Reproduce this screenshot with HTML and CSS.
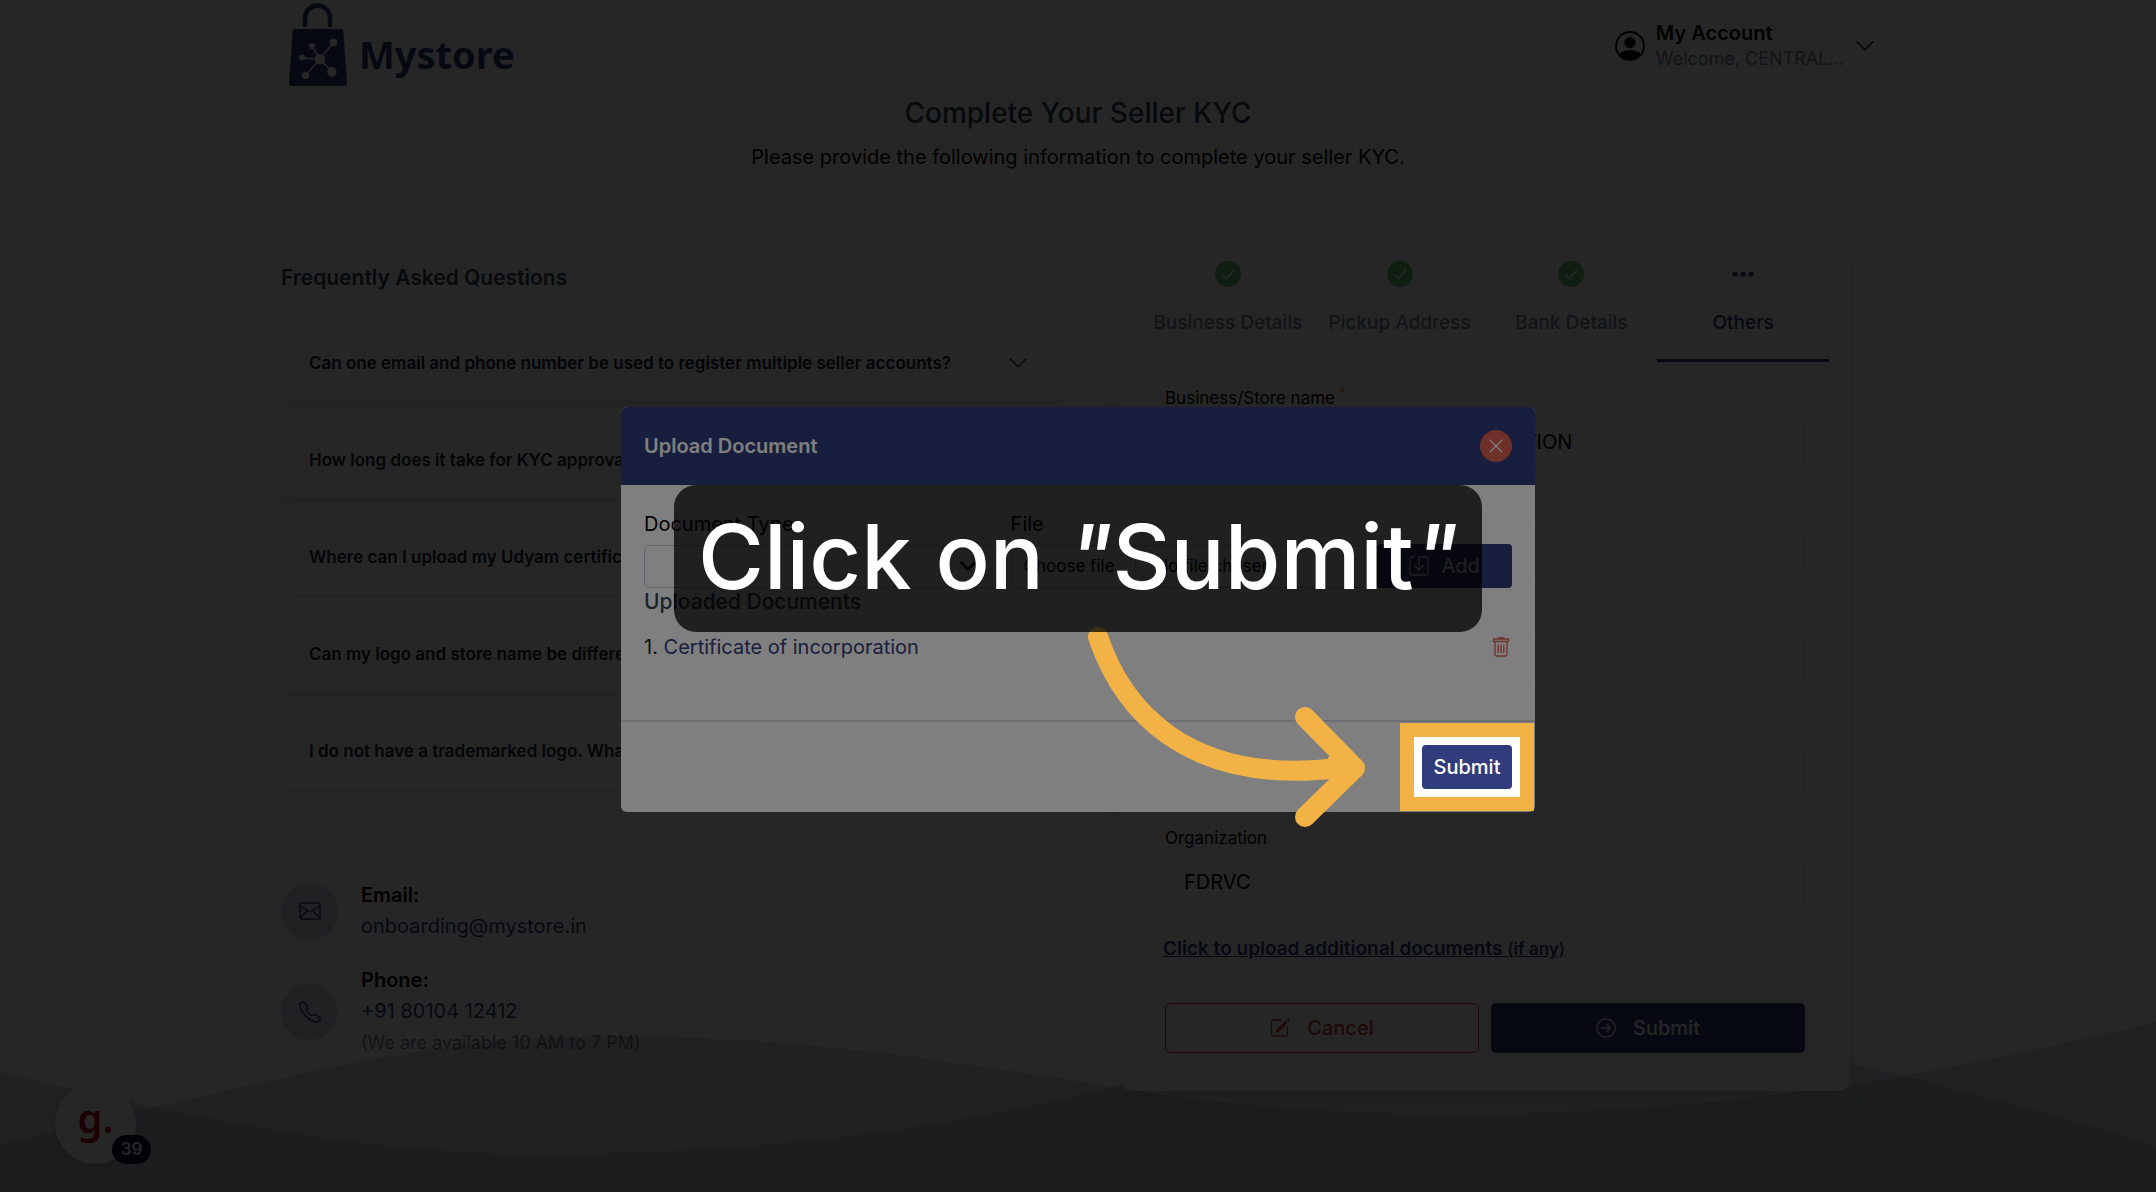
FILE: index.html
```html
<!DOCTYPE html>
<html lang="en">

<head>
  <meta charset="UTF-8">
  <meta name="viewport" content="width=device-width, initial-scale=1.0">
  <title>Mystore - Complete Your Seller KYC</title>
  <link rel="stylesheet" href="styles.css">
</head>

<body>
  <svg class="sprite" aria-hidden="true">
    <symbol id="chevron" viewBox="0 0 16 16">
      <path d="M1.6 4.6 8 11l6.4-6.4" fill="none" stroke="currentColor" stroke-linecap="round" stroke-linejoin="round" />
    </symbol>
    <symbol id="check" viewBox="0 0 26 26">
      <circle cx="13" cy="13" r="13" fill="currentColor" />
      <path d="M7.5 13.8l3.7 4L19 8.8" fill="none" stroke="#fff" stroke-width="1.6" stroke-linecap="round" stroke-linejoin="round" />
    </symbol>
  </svg>

  <header class="header">
    <div class="container header-inner">
      <a class="logo" href="#">
        <svg width="60" height="84" viewBox="0 0 60 84" aria-hidden="true">
          <path d="M17 24V15a12.500 12.500 0 0 1 25 0v9" fill="none" stroke="currentColor" stroke-width="4.500" />
          <path d="M7 26h46q2.200 0 2.400 2.200L59 80.500q.2 2.500-2 2.500H3q-2.200 0-2-2.500L4.600 28.200Q4.800 26 7 26z" fill="currentColor" />
          <g stroke="#fff" stroke-width="1.500" fill="#fff">
            <path d="M32 56 45 40M32 56 24 43M32 56 14 55M32 56 17 73M32 56 44 69" />
            <circle cx="32" cy="56" r="4.500" />
            <circle cx="45.500" cy="39.500" r="3" />
            <circle cx="24" cy="43" r="2.200" />
            <circle cx="14" cy="54.500" r="2.200" />
            <circle cx="17.500" cy="72.500" r="2.800" />
            <circle cx="44" cy="69" r="4" />
          </g>
        </svg>
        <span>Mystore</span>
      </a>
      <button class="account" type="button">
        <svg width="30" height="30" viewBox="0 0 30 30" aria-hidden="true">
          <defs>
            <clipPath id="avatar"><circle cx="15" cy="15" r="14" /></clipPath>
          </defs>
          <circle cx="15" cy="15" r="14" fill="none" stroke="currentColor" stroke-width="1.800" />
          <circle cx="15" cy="11.500" r="5.600" fill="currentColor" />
          <ellipse cx="15" cy="27" rx="12" ry="8" fill="currentColor" clip-path="url(#avatar)" />
        </svg>
        <span class="account-text">
          <strong>My Account</strong>
          <small>Welcome, CENTRAL...</small>
        </span>
        <svg class="chevron" width="20" height="20" aria-hidden="true"><use href="#chevron" /></svg>
      </button>
    </div>
  </header>

  <main class="container">
    <div class="intro">
      <h1>Complete Your Seller KYC</h1>
      <p>Please provide the following information to complete your seller KYC.</p>
    </div>

    <div class="columns">
      <section class="help">
        <h2>Frequently Asked Questions</h2>
        <div class="faq">
          <button type="button">Can one email and phone number be used to register multiple seller accounts?
            <svg width="20" height="20" aria-hidden="true"><use href="#chevron" /></svg></button>
          <button type="button">How long does it take for KYC approval?
            <svg width="20" height="20" aria-hidden="true"><use href="#chevron" /></svg></button>
          <button type="button">Where can I upload my Udyam certificate?
            <svg width="20" height="20" aria-hidden="true"><use href="#chevron" /></svg></button>
          <button type="button">Can my logo and store name be different?
            <svg width="20" height="20" aria-hidden="true"><use href="#chevron" /></svg></button>
          <button type="button">I do not have a trademarked logo. What should I do?
            <svg width="20" height="20" aria-hidden="true"><use href="#chevron" /></svg></button>
        </div>

        <div class="contact">
          <span class="contact-icon">
            <svg width="22" height="22" viewBox="0 0 22 22" fill="none" stroke="currentColor" stroke-width="1.400" stroke-linejoin="round" aria-hidden="true">
              <rect x="1" y="3" width="20" height="16" rx="2" />
              <path d="M1 6l10 6 10-6M1 18l7.500-7.300M21 18l-7.500-7.300" />
            </svg>
          </span>
          <div>
            <strong>Email:</strong>
            <a href="mailto:onboarding@mystore.in">onboarding@mystore.in</a>
          </div>
        </div>
        <div class="contact">
          <span class="contact-icon">
            <svg width="22" height="22" viewBox="0 0 16 16" fill="currentColor" aria-hidden="true">
              <path d="M3.654 1.328a.678.678 0 0 0-1.015-.063L1.605 2.300c-.483.484-.661 1.169-.45 1.770a17.568 17.568 0 0 0 4.168 6.608 17.569 17.569 0 0 0 6.608 4.168c.601.211 1.286.033 1.770-.450l1.034-1.034a.678.678 0 0 0-.063-1.015l-2.307-1.794a.678.678 0 0 0-.580-.122l-2.190.547a1.745 1.745 0 0 1-1.657-.459L5.482 8.062a1.745 1.745 0 0 1-.460-1.657l.548-2.190a.678.678 0 0 0-.122-.580L3.654 1.328zM1.884.511a1.745 1.745 0 0 1 2.612.163L6.290 2.980c.329.423.445.974.315 1.494l-.547 2.190a.678.678 0 0 0 .178.643l2.457 2.457a.678.678 0 0 0 .644.178l2.189-.547a1.745 1.745 0 0 1 1.494.315l2.306 1.794c.829.645.905 1.870.163 2.611l-1.034 1.034c-.740.740-1.846 1.065-2.877.702a18.634 18.634 0 0 1-7.010-4.420 18.634 18.634 0 0 1-4.420-7.009c-.362-1.030-.037-2.137.703-2.877L1.885.511z" />
            </svg>
          </span>
          <div>
            <strong>Phone:</strong>
            <a href="tel:+918010412412">+91 80104 12412</a>
            <small>(We are available 10 AM to 7 PM)</small>
          </div>
        </div>
      </section>

      <form class="card">
        <nav class="steps">
          <a href="#"><svg class="done" width="26" height="26" aria-hidden="true"><use href="#check" /></svg>Business Details</a>
          <a href="#"><svg class="done" width="26" height="26" aria-hidden="true"><use href="#check" /></svg>Pickup Address</a>
          <a href="#"><svg class="done" width="26" height="26" aria-hidden="true"><use href="#check" /></svg>Bank Details</a>
          <a class="active" href="#">
            <svg width="26" height="26" viewBox="0 0 26 26" fill="currentColor" aria-hidden="true">
              <circle cx="5" cy="13" r="2.600" />
              <circle cx="13" cy="13" r="2.600" />
              <circle cx="21" cy="13" r="2.600" />
            </svg>Others</a>
        </nav>

        <div class="fields">
          <div class="field">
            <label for="store">Business/Store name <sup>*</sup></label>
            <input id="store" type="text" value="CENTRAL WAREHOUSES CORPORATION">
          </div>
          <div class="field">
            <label for="contact">Contact name</label>
            <input id="contact" type="text">
          </div>
          <div class="field">
            <label for="category">Category</label>
            <input id="category" type="text">
          </div>
          <div class="field">
            <label for="website">Website</label>
            <input id="website" type="text">
          </div>
          <div class="field">
            <label for="organization">Organization</label>
            <input id="organization" type="text" value="FDRVC">
          </div>

          <a class="upload-link" href="#upload">Click to upload additional documents <small>(if any)</small></a>

          <div class="actions">
            <button class="cancel" type="button">
              <svg width="20" height="20" viewBox="0 0 20 20" aria-hidden="true">
                <path d="M11.500 2H3a1.500 1.500 0 0 0-1.500 1.500v13A1.500 1.500 0 0 0 3 18h13a1.500 1.500 0 0 0 1.500-1.500V8.500" fill="none" stroke="currentColor" stroke-width="1.300" />
                <path d="M15.500 2.500l2.200 2.200-9.200 9.600-3.200 1 1-3.200zM16.400 1.600l.8-.8q.5-.5 1 0l1.200 1.200q.5.500 0 1l-.8.800z" fill="currentColor" />
              </svg>
              Cancel
            </button>
            <button class="submit" type="button">
              <svg width="20" height="20" viewBox="0 0 20 20" fill="none" stroke="currentColor" stroke-width="1.300" stroke-linecap="round" stroke-linejoin="round" aria-hidden="true">
                <circle cx="10" cy="10" r="9.200" />
                <path d="M5.500 10h8.500M10.500 6.300l3.700 3.700-3.700 3.700" />
              </svg>
              Submit
            </button>
          </div>
        </div>
      </form>
    </div>
  </main>

  <svg class="waves" viewBox="0 0 2156 172" preserveAspectRatio="none" aria-hidden="true">
    <path d="M0 52C50 64 100 76 155 87C280 114 410 134 540 134C760 134 940 110 1113 67C1300 10 1420 0 1520 0C1640 0 1780 26 1904 56C1990 77 2080 102 2156 126V172H0z" />
    <path d="M0 125C50 112 100 100 155 87C330 46 460 16 610 16C780 16 940 38 1113 67C1230 86 1340 94 1460 94C1620 94 1760 80 1904 56C1990 40 2080 20 2156 2V172H0z" />
  </svg>

  <button class="widget" type="button">g.<span>39</span></button>

  <div class="backdrop">
    <div class="modal" role="dialog" aria-labelledby="modal-title">
      <div class="modal-header">
        <h2 id="modal-title">Upload Document</h2>
        <button class="close" type="button" aria-label="Close">
          <svg width="14" height="14" viewBox="0 0 14 14" stroke="currentColor" stroke-width="1.200" stroke-linecap="round" aria-hidden="true">
            <path d="M1 1l12 12M13 1 1 13" />
          </svg>
        </button>
      </div>

      <div class="modal-body">
        <div class="upload-row">
          <div>
            <label for="type">Document Type</label>
            <select id="type">
              <option></option>
            </select>
          </div>
          <div>
            <label for="file">File</label>
            <label class="file">
              <input id="file" type="file">
              <span class="file-button">Choose file</span>
              <span>No file chosen</span>
            </label>
          </div>
          <button class="add" type="button">
            <svg width="20" height="20" viewBox="0 0 20 20" fill="none" stroke="currentColor" stroke-width="1.300" stroke-linecap="round" stroke-linejoin="round" aria-hidden="true">
              <path d="M5 1H2.500A1.500 1.500 0 0 0 1 2.500v15A1.500 1.500 0 0 0 2.500 19h15a1.500 1.500 0 0 0 1.500-1.500v-15A1.500 1.500 0 0 0 17.500 1H10v12.500M5.500 9.500l4.500 4.500 4.500-4.500" />
            </svg>
            Add
          </button>
        </div>

        <h3>Uploaded Documents</h3>
        <div class="document">
          <span>1. <a href="#">Certificate of incorporation</a></span>
          <button type="button" aria-label="Delete">
            <svg width="18" height="20" viewBox="0 0 18 20" fill="none" stroke="currentColor" stroke-width="1.300" stroke-linejoin="round" aria-hidden="true">
              <path d="M1.500 2h15v2.500h-15zM6.500 2V1h5v1M3 4.500V17.500Q3 19 4.500 19h9q1.500 0 1.500-1.500V4.500M6.200 7.500v8.500M9 7.500v8.500M11.800 7.500v8.500" />
            </svg>
          </button>
        </div>
      </div>

      <div class="modal-footer">
        <div class="target">
          <button class="modal-submit" type="button">Submit</button>
          <div class="spotlight"></div>
        </div>
      </div>

      <!-- guide step: arrow from the caption to the highlighted button -->
      <svg class="arrow" width="290" height="210" viewBox="0 0 290 210" fill="none" stroke="#f3b246" stroke-width="20" stroke-linecap="round" stroke-linejoin="round" aria-hidden="true">
        <path d="M17 20C39 85 99 170 258 151" />
        <path d="M224 100l50 51-50 49" />
        <path d="M250 142l12 9-12 9z" fill="#f3b246" stroke-width="6" />
      </svg>
      <div class="caption">Click on <i>"</i>Submit<i>"</i></div>
    </div>
  </div>
</body>

</html>
```
FILE: styles.css
```css
* {
  box-sizing: border-box;
}

body {
  margin: 0;
  min-height: 100vh;
  position: relative;
  overflow: hidden;
  font: 20px/30px Inter, sans-serif;
  color: #000;
  background: #fff;
}

h1,
h2,
h3,
p {
  margin: 0;
}

a {
  color: #303c7c;
  text-decoration: none;
}

button,
input,
select {
  font: inherit;
  color: inherit;
}

button {
  border: 0;
  padding: 0;
  background: none;
}

svg {
  flex: none;
}

.sprite {
  position: absolute;
  width: 0;
  height: 0;
}

.container {
  max-width: 1594px;
  margin: 0 auto;
}

/* header */

.header {
  position: relative;
  z-index: 2;
  background: #fff;
  box-shadow: 0 0 12px rgba(0, 0, 0, .12);
}

.header-inner {
  height: 97px;
  display: flex;
  justify-content: space-between;
  align-items: flex-start;
}

.logo {
  display: flex;
  align-items: center;
  gap: 11px;
  padding: 3px 0 0 7px;
  font: bold 38px/48px "Noto Sans", sans-serif;
}

.logo span {
  padding-top: 18px;
}

.account {
  display: flex;
  align-items: center;
  gap: 11px;
  padding-top: 20px;
  text-align: left;
}

.account-text {
  display: grid;
  line-height: 26px;
}

.account strong {
  font-size: 20px;
  font-weight: 600;
}

.account small {
  font-size: 18px;
  color: #7c829c;
}

/* intro */

.intro {
  text-align: center;
}

.intro h1 {
  font-size: 28px;
  font-weight: 500;
  line-height: 32px;
  color: #344357;
}

.intro p {
  padding-top: 13px;
}

.columns {
  display: grid;
  grid-template-columns: 780fr 729fr;
  gap: 60px;
  align-items: start;
  padding: 58px 25px 0 0;
}

/* faq */

.help {
  padding-top: 33px;
}

.help h2 {
  font-size: 21px;
  font-weight: 600;
  line-height: 30px;
  color: #344357;
}

.faq {
  display: grid;
  gap: 21px;
  padding: 32px 0 91px;
}

.faq button {
  display: flex;
  justify-content: space-between;
  align-items: center;
  height: 76px;
  padding: 0 33px 0 28px;
  border-radius: 6px;
  font-size: 17px;
  font-weight: 600;
  text-align: left;
  color: #1c2430;
  box-shadow: 0 2px 8px rgba(0, 0, 0, .16);
}

.contact {
  display: flex;
  gap: 23px;
  align-items: center;
  padding-bottom: 23px;
}

.contact div {
  display: grid;
  line-height: 31px;
}

.contact strong {
  font-weight: 600;
}

.contact small {
  font-size: 18px;
  color: #7c8290;
}

.contact-icon {
  display: grid;
  place-items: center;
  width: 57px;
  height: 57px;
  border-radius: 50%;
  color: #303c7c;
  background: #dfdfe9;
}

/* kyc form */

.card {
  position: relative;
  z-index: 1;
  padding: 21px 21px 38px;
  border-radius: 12px;
  background: #fff;
  box-shadow: 0 4px 32px rgba(0, 0, 0, .12);
}

.steps {
  display: grid;
  grid-template-columns: repeat(4, 1fr);
  border-bottom: 1px solid #dbdfea;
}

.steps a {
  display: grid;
  justify-items: center;
  gap: 21px;
  padding: 10px 0 21px;
  margin-bottom: -3px;
  border-bottom: 3px solid transparent;
  font-size: 19px;
  font-weight: 500;
  color: #7c829c;
}

.steps .active {
  color: #303c7c;
  border-color: #303c7c;
}

.done {
  color: #6fbf73;
}

.fields {
  padding: 26px 24px 0 23px;
}

.field label {
  display: block;
  font-size: 17px;
  line-height: 24px;
  padding-bottom: 7px;
}

.field sup {
  font-size: 12px;
  line-height: 0;
  color: #e85347;
}

.field input {
  display: block;
  width: 100%;
  height: 50px;
  padding: 0 18px;
  margin-bottom: 29px;
  border: 1px solid #dbdfea;
  border-radius: 6px;
  background: #fff;
}

.upload-link {
  display: block;
  margin: -2px 0 0 -2px;
  font-size: 19px;
  font-weight: 600;
  text-decoration: underline;
}

.upload-link small {
  font-size: 17px;
}

.actions {
  display: grid;
  grid-template-columns: 1fr 1fr;
  gap: 12px;
  padding-top: 39px;
}

.actions button {
  display: flex;
  justify-content: center;
  align-items: center;
  gap: 17px;
  height: 50px;
  border-radius: 5px;
  font-weight: 500;
}

.cancel {
  color: #c63d33;
  border: 1px solid #c63d33;
}

.submit {
  color: #fff;
  background: #303c7c;
}

/* page bottom */

.waves {
  position: absolute;
  left: 0;
  bottom: 0;
  width: 100%;
  height: 172px;
  fill: rgba(30, 36, 90, .15);
}

.widget {
  position: absolute;
  left: 55px;
  bottom: 28px;
  width: 81px;
  height: 81px;
  padding-bottom: 12px;
  border-radius: 50%;
  font: 600 40px/40px "Noto Sans", sans-serif;
  color: #c0001b;
  background: #fff;
  box-shadow: 0 2px 12px rgba(0, 0, 0, .2);
}

.widget span {
  position: absolute;
  right: -15px;
  bottom: 0;
  width: 39px;
  border-radius: 15px;
  font: 600 17px/29px Inter, sans-serif;
  color: #fff;
  background: #0b1030;
}

/* upload modal */

.backdrop {
  position: fixed;
  inset: 0;
  z-index: 10;
  display: flex;
  align-items: center;
  justify-content: center;
  padding-top: 26px;
  overflow: hidden;
  background: rgba(0, 0, 0, .7);
}

.modal {
  position: relative;
  width: 914px;
  border-radius: 6px;
  background: #fff;
}

.modal-header {
  display: flex;
  justify-content: space-between;
  align-items: center;
  height: 78px;
  padding: 0 23px;
  border-radius: 6px 6px 0 0;
  color: #fff;
  background: #303c7c;
}

.modal-header h2 {
  font-size: 20px;
  font-weight: 600;
}

.close {
  display: grid;
  place-items: center;
  width: 32px;
  height: 32px;
  border-radius: 50%;
  background: #dd6153;
}

.modal-body {
  padding: 23px 23px 58px;
}

.upload-row {
  display: grid;
  grid-template-columns: 355fr 355fr 135fr;
  gap: 12px;
  align-items: end;
}

.upload-row label {
  display: block;
  line-height: 32px;
  padding-bottom: 5px;
}

.upload-row select,
.upload-row .file {
  width: 100%;
  height: 43px;
  border: 1px solid #c9cbe0;
  border-radius: 5px;
  background: #fff;
}

.upload-row select {
  display: block;
  appearance: none;
  padding: 0 40px 0 16px;
  background: url("data:image/svg+xml,%3Csvg xmlns='http://www.w3.org/2000/svg' width='16' height='16' viewBox='0 0 16 16'%3E%3Cpath d='M2 5l6 6 6-6' fill='none' stroke='%23000' stroke-width='2' stroke-linecap='round' stroke-linejoin='round'/%3E%3C/svg%3E") no-repeat right 21px center / 18px 18px;
}

.upload-row .file {
  display: flex;
  gap: 20px;
  padding: 0 12px;
  font-size: 17px;
  line-height: 41px;
}

.file input {
  position: absolute;
  width: 1px;
  height: 1px;
  opacity: 0;
}

.file-button {
  padding-right: 20px;
  border-right: 1px solid #c9cbe0;
}

.add {
  display: flex;
  justify-content: center;
  align-items: center;
  gap: 12px;
  height: 44px;
  border-radius: 4px;
  color: #fff;
  background: #303c7c;
}

.modal h3 {
  font-size: 21px;
  font-weight: 500;
  line-height: 28px;
  color: #344357;
}

.document {
  display: flex;
  justify-content: space-between;
  align-items: center;
  padding-top: 16px;
  color: #1c2430;
}

.document button {
  display: grid;
  margin-right: 2px;
  color: #dd6153;
}

.modal-footer {
  display: flex;
  justify-content: flex-end;
  padding: 23px;
  border-top: 2px solid #dbdfea;
}

.target {
  position: relative;
}

.modal-submit {
  display: block;
  width: 90px;
  height: 44px;
  border-radius: 4px;
  font-weight: 500;
  color: #fff;
  background: #303c7c;
}

/* guide step */

.spotlight {
  position: absolute;
  inset: -8px;
  box-shadow: 0 0 0 14px #f3b246, 0 0 0 9999px rgba(0, 0, 0, .5);
  pointer-events: none;
}

.arrow {
  position: absolute;
  left: 460px;
  top: 210px;
}

.caption {
  position: absolute;
  left: 53px;
  right: 53px;
  top: 78px;
  height: 147px;
  border-radius: 22px;
  font-size: 90px;
  font-weight: 500;
  line-height: 144px;
  text-align: center;
  white-space: nowrap;
  color: #fff;
  background: rgba(0, 0, 0, .75);
}
```
